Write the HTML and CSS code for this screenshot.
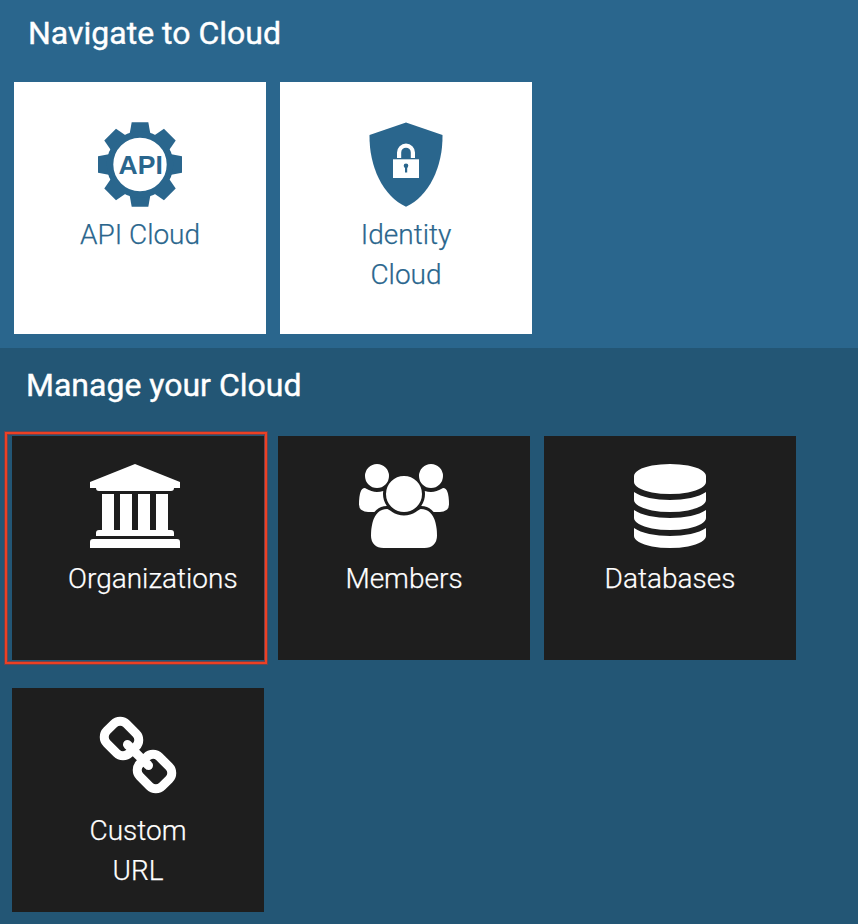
FILE: index.html
```html
<!DOCTYPE html>
<html lang="en">
<head>
<meta charset="utf-8">
<title>Cloud</title>
<link rel="stylesheet" href="styles.css">
</head>
<body>
<section class="navigate">
  <h2>Navigate to Cloud</h2>
  <div class="tiles">
    <a class="tile light">
      <svg class="icon" width="84" height="85" viewBox="-42 -42.500 84 85">
        <defs><path id="tooth" d="M-10.5-30 -8.3-42.200H8.3L10.5-30Z"/></defs>
        <g fill="currentColor">
          <use href="#tooth"/>
          <use href="#tooth" transform="rotate(45)"/>
          <use href="#tooth" transform="rotate(90)"/>
          <use href="#tooth" transform="rotate(135)"/>
          <use href="#tooth" transform="rotate(180)"/>
          <use href="#tooth" transform="rotate(225)"/>
          <use href="#tooth" transform="rotate(270)"/>
          <use href="#tooth" transform="rotate(315)"/>
        </g>
        <circle r="30" fill="#fff" stroke="currentColor" stroke-width="6.6"/>
        <text class="api" x="0.7" y="9.300" text-anchor="middle">API</text>
      </svg>
      <span class="label">API Cloud</span>
    </a>
    <a class="tile light">
      <svg class="icon" width="74" height="85" viewBox="0 -0.5 74 85">
        <path fill="currentColor" d="M37 0 73.5 12.6C74 44 60 74 37 84.3 14 74 0 44 .5 12.6Z"/>
        <path fill="none" stroke="#fff" stroke-width="4.2" d="M30.1 35.500V30a6.900 6.900 0 0 1 13.800 0v5.500"/>
        <path fill="#fff" d="M24 36.800h26v18.700H24z"/>
        <circle cx="37" cy="43.300" r="2.300" fill="currentColor"/>
        <path fill="currentColor" d="M36 44h2.200v6H36z"/>
      </svg>
      <span class="label">Identity Cloud</span>
    </a>
  </div>
</section>
<section class="manage">
  <h2>Manage your Cloud</h2>
  <div class="tiles">
    <a class="tile dark selected">
      <svg class="icon" width="90" height="84" viewBox="0 0 90 84">
        <path fill="currentColor" d="M45 0 90 18v6H84q0 3-3 3H9q-3 0-3-3H0V18ZM12 30H24V66H30V30H42V66H48V30H60V66H66V30H78V66H81q3 0 3 3v3H6V69q0-3 3-3H12ZM3 75H87q3 0 3 3v6H0V78q0-3 3-3Z"/>
      </svg>
      <span class="label">Organizations</span>
    </a>
    <a class="tile dark">
      <svg class="icon" width="90" height="84" viewBox="0 0 1920 1792">
        <path fill="currentColor" d="M593 896q-162 5-265 128h-134q-82 0-138-40.500t-56-118.500q0-353 124-353 6 0 43.500 21t97.500 42.500 119 21.500q67 0 133-23-5 37-5 66 0 139 81 256zm1071 637q0 120-73 189.500t-194 69.500h-874q-121 0-194-69.500t-73-189.500q0-53 3.500-103.500t14-109 26.500-108.500 43-97.500 62-81 85.500-53.500 111.500-20q10 0 43 21.500t73 48 107 48 135 21.500 135-21.500 107-48 73-48 43-21.500q61 0 111.500 20t85.500 53.500 62 81 43 97.500 26.500 108.500 14 109 3.500 103.500zm-1024-1277q0 106-75 181t-181 75-181-75-75-181 75-181 181-75 181 75 75 181zm704 384q0 159-112.500 271.500t-271.500 112.500-271.500-112.500-112.500-271.500 112.500-271.500 271.500-112.500 271.500 112.500 112.500 271.500zm576 225q0 78-56 118.500t-138 40.500h-134q-103-123-265-128 81-117 81-256 0-29-5-66 66 23 133 23 59 0 119-21.500t97.500-42.500 43.500-21q124 0 124 353zm-128-609q0 106-75 181t-181 75-181-75-75-181 75-181 181-75 181 75 75 181z"/>
      </svg>
      <span class="label">Members</span>
    </a>
    <a class="tile dark">
      <svg class="icon" width="72" height="84" viewBox="0 0 1536 1792">
        <path fill="currentColor" d="M768 768q237 0 443-43t325-127v170q0 69-103 128t-280 93.500-385 34.500-385-34.500-280-93.500-103-128v-170q119 84 325 127t443 43zm0 768q237 0 443-43t325-127v170q0 69-103 128t-280 93.500-385 34.500-385-34.500-280-93.500-103-128v-170q119 84 325 127t443 43zm0-384q237 0 443-43t325-127v170q0 69-103 128t-280 93.500-385 34.500-385-34.500-280-93.500-103-128v-170q119 84 325 127t443 43zm0-1152q208 0 385 34.500t280 93.500 103 128v128q0 69-103 128t-280 93.500-385 34.500-385-34.500-280-93.500-103-128v-128q0-69 103-128t280-93.500 385-34.500z"/>
      </svg>
      <span class="label">Databases</span>
    </a>
    <a class="tile dark">
      <svg class="icon" width="84" height="84" viewBox="0 0 1792 1792">
        <path fill="currentColor" d="M1520 1216q0-40-28-68l-208-208q-28-28-68-28-42 0-72 32 3 3 19 18.500t21.500 21.500 15 19 13 25.500 3.500 27.500q0 40-28 68t-68 28q-15 0-27.500-3.500t-25.500-13-19-15-21.500-21.500-18.500-19q-33 31-33 73 0 40 28 68l206 207q27 27 68 27 40 0 68-26l147-146q28-28 28-67zm-703-705q0-40-28-68l-206-207q-28-28-68-28-39 0-68 27l-147 146q-28 28-28 67 0 40 28 68l208 208q27 27 68 27 42 0 72-31-3-3-19-18.500t-21.500-21.500-15-19-13-25.500-3.500-27.500q0-40 28-68t68-28q15 0 27.500 3.500t25.500 13 19 15 21.500 21.500 18.500 19q33-31 33-73zm895 705q0 120-85 203l-147 146q-83 83-203 83-121 0-204-85l-206-207q-83-83-83-203 0-123 88-209l-88-88q-86 88-208 88-120 0-204-84l-208-208q-84-84-84-204t85-203l147-146q83-83 203-83 121 0 204 85l206 207q83 83 83 203 0 123-88 209l88 88q86-88 208-88 120 0 204 84l208 208q84 84 84 204z"/>
      </svg>
      <span class="label">Custom URL</span>
    </a>
  </div>
</section>
</body>
</html>
```

FILE: styles.css
```css
* { box-sizing: border-box; }
body {
  margin: 0;
  font-family: Roboto, sans-serif;
  background: #235675;
  color: #fff;
}
section { overflow: hidden; }
h2 {
  margin: 0;
  font-size: 32px;
  font-weight: 400;
  line-height: 40px;
  -webkit-text-stroke: 0.4px currentColor;
}
.navigate {
  height: 348px;
  padding: 13px 14px 0;
  background: #2a668d;
}
.navigate h2 { padding-left: 14px; margin-bottom: 29px; }
.manage {
  height: 576px;
  padding: 17px 12px 0;
  background: #235675;
}
.manage h2 { padding-left: 14px; margin-bottom: 31px; }
.tiles {
  display: flex;
  flex-wrap: wrap;
  gap: 28px 14px;
}
.tile {
  display: flex;
  flex-direction: column;
  align-items: center;
  width: 252px;
}
.light {
  height: 252px;
  padding: 40px 56px 0;
  background: #fff;
  color: #2a668d;
}
.dark {
  height: 224px;
  padding: 28px 56px 0;
  background: #1e1e1e;
}
.icon { display: block; flex: none; }
.label {
  margin-top: 8px;
  font-size: 28px;
  font-weight: 300;
  line-height: 40px;
  text-align: center;
  -webkit-text-stroke: 0.25px currentColor;
}
.dark .label { margin-top: 11px; }
.api {
  font: bold 26.5px "Liberation Sans", sans-serif;
  fill: currentColor;
}
.selected {
  position: relative;
  align-items: flex-start;
}
.selected .icon { margin-left: 22px; }
.selected::after {
  content: "";
  position: absolute;
  inset: -4px -3px -4px -7px;
  border: 2px solid #ee4023;
  box-shadow: 0 0 0 1px rgba(150, 60, 60, 0.6), inset 0 0 0 1px rgba(150, 60, 60, 0.7);
}
```
